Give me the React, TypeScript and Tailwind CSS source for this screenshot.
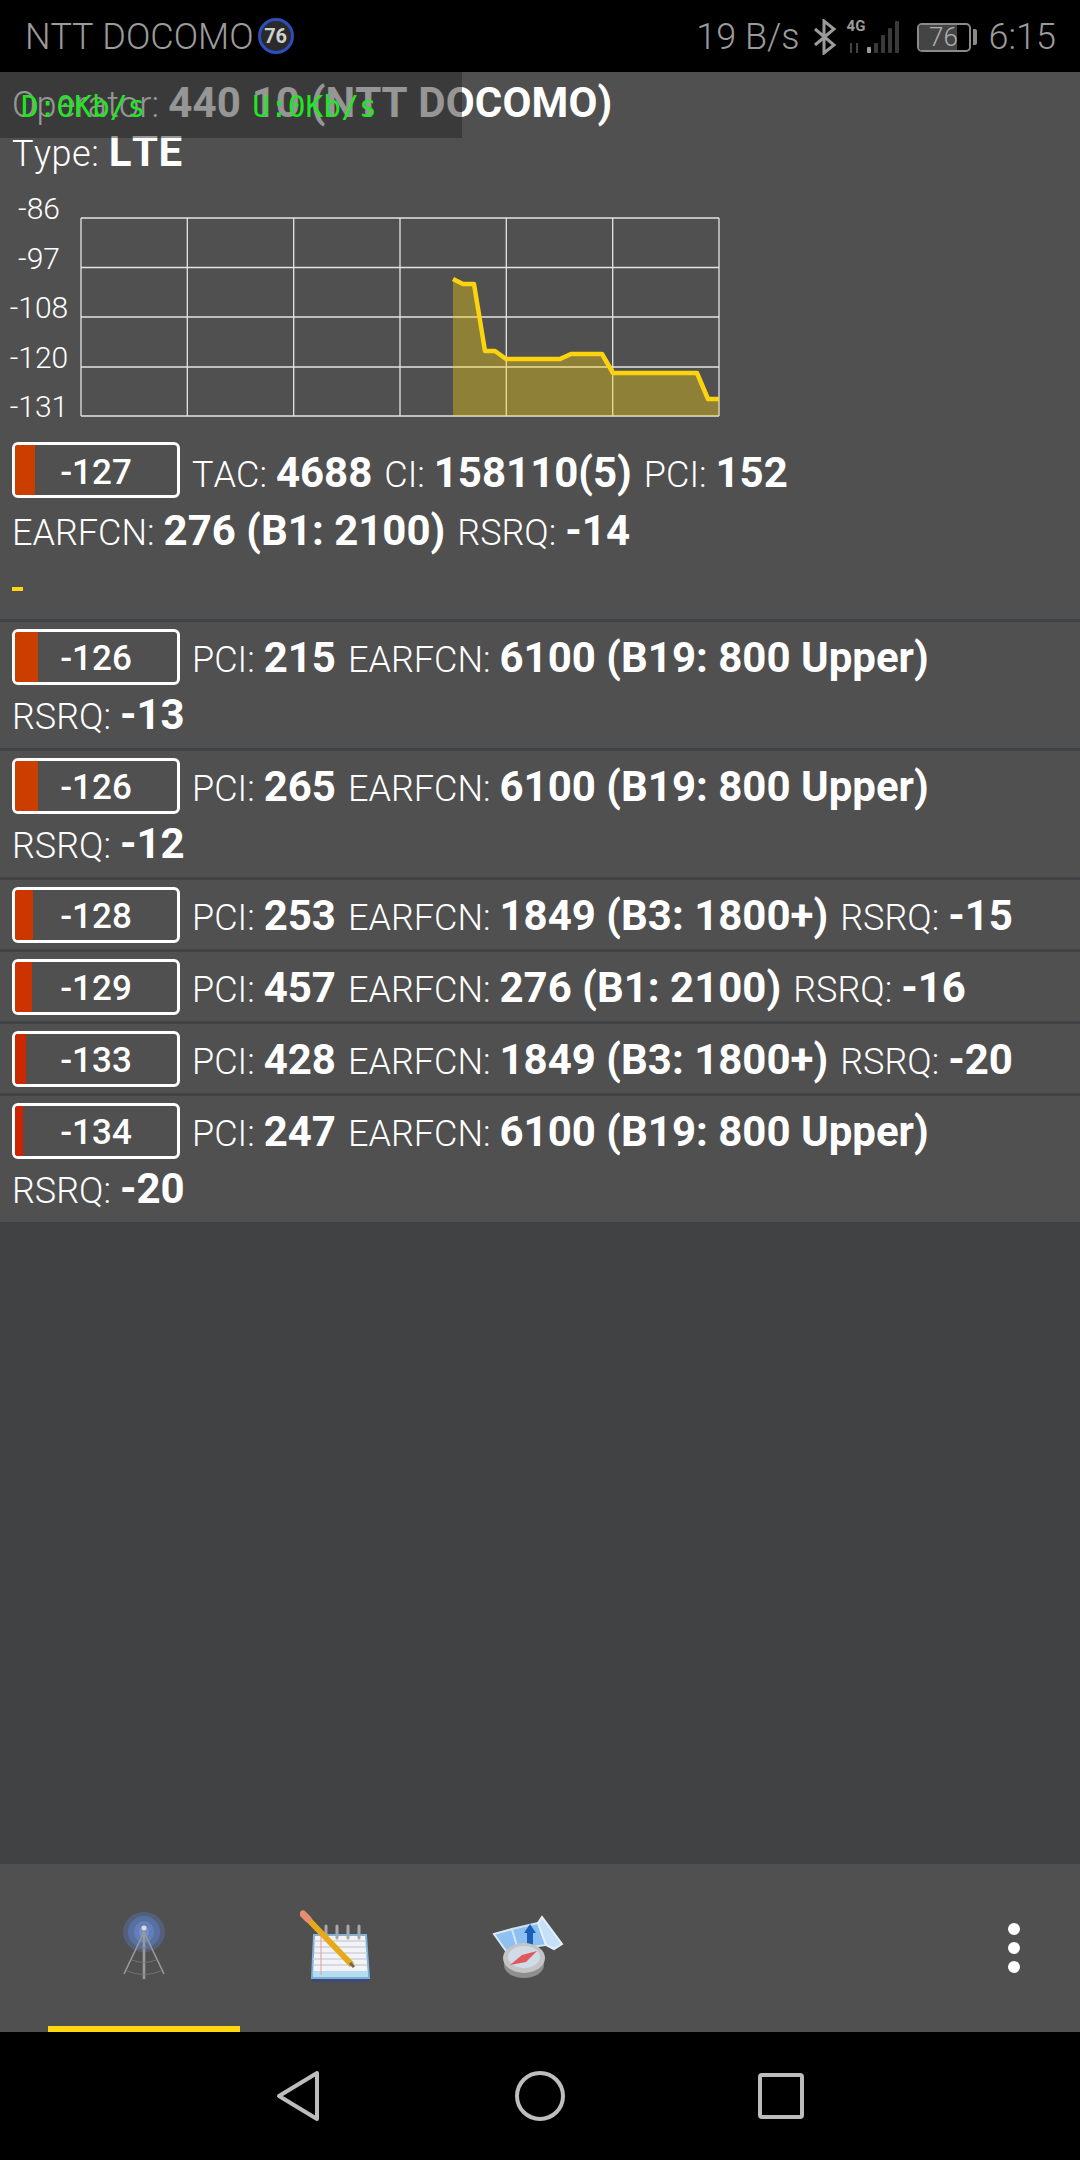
import type { JSX } from 'react'

interface Cell {
  dbm: number
  bar: string
  barColor: string
  parts: [string, string][]
  extra?: [string, string]
}

const CELLS: Cell[] = [
  { dbm: -126, bar: 'w-[23px]', barColor: 'bg-[#cc3d00]', parts: [['PCI:', '215'], ['EARFCN:', '6100 (B19: 800 Upper)']], extra: ['RSRQ:', '-13'] },
  { dbm: -126, bar: 'w-[23px]', barColor: 'bg-[#cc3d00]', parts: [['PCI:', '265'], ['EARFCN:', '6100 (B19: 800 Upper)']], extra: ['RSRQ:', '-12'] },
  { dbm: -128, bar: 'w-[18px]', barColor: 'bg-[#cc3700]', parts: [['PCI:', '253'], ['EARFCN:', '1849 (B3: 1800+)'], ['RSRQ:', '-15']] },
  { dbm: -129, bar: 'w-[17px]', barColor: 'bg-[#cc3300]', parts: [['PCI:', '457'], ['EARFCN:', '276 (B1: 2100)'], ['RSRQ:', '-16']] },
  { dbm: -133, bar: 'w-[11px]', barColor: 'bg-[#cc2800]', parts: [['PCI:', '428'], ['EARFCN:', '1849 (B3: 1800+)'], ['RSRQ:', '-20']] },
  { dbm: -134, bar: 'w-[8px]', barColor: 'bg-[#cc2400]', parts: [['PCI:', '247'], ['EARFCN:', '6100 (B19: 800 Upper)']], extra: ['RSRQ:', '-20'] },
]

const Y_LABELS = ['-86', '-97', '-108', '-120', '-131']

function Field({ label, value }: { label: string; value: string }): JSX.Element {
  return (
    <span className="whitespace-nowrap">
      <span className="font-light">{label}</span> <span className="font-bold text-[42px]">{value}</span>
    </span>
  )
}

function SignalBox({ dbm, bar, barColor }: { dbm: number; bar: string; barColor: string }): JSX.Element {
  return (
    <div className="relative h-[56px] w-[168px] shrink-0 rounded-[6px] border-[3px] border-white overflow-hidden flex items-center justify-center">
      <div className={`absolute left-0 top-0 bottom-0 ${bar} ${barColor}`} />
      <span className="relative mt-[4px] text-[35px] font-medium text-white leading-none">{dbm}</span>
    </div>
  )
}

function Chart(): JSX.Element {
  const pts = '453,279 463,284 474,284 485,351 495,351 506,359 560,359 571,354 602,354 613,373 697,373 708,399 719,399'
  return (
    <svg width="652" height="206" viewBox="75 214 652 206" className="block mt-[31px]">
      {[218, 267.5, 317, 367, 416].map((y) => (
        <line key={y} x1="81" x2="719" y1={y} y2={y} stroke="#e4e4e4" strokeWidth="1.3" />
      ))}
      {[81, 187.3, 293.7, 400, 506.3, 612.7, 719].map((x) => (
        <line key={x} x1={x} x2={x} y1="218" y2="416" stroke="#e4e4e4" strokeWidth="1.3" />
      ))}
      <polygon points={`${pts} 719,416 453,416`} fill="#ffd60f" fillOpacity="0.36" />
      <polyline points={pts} fill="none" stroke="#fbd40f" strokeWidth="4.5" strokeLinejoin="round" />
    </svg>
  )
}

function TowerIcon(): JSX.Element {
  return (
    <svg width="44" height="70" viewBox="0 0 44 70" className="blur-[0.7px]">
      <ellipse cx="22" cy="22" rx="21" ry="20" fill="#566a92" opacity="0.6" />
      <ellipse cx="22" cy="22" rx="16" ry="16" fill="#5876b2" opacity="0.75" />
      <ellipse cx="22" cy="22" rx="10" ry="11" fill="#6c8ac6" opacity="0.6" />
      <ellipse cx="22" cy="22" rx="5" ry="6" fill="#7f9ad0" opacity="0.6" />
      <circle cx="22" cy="18" r="2.5" fill="#dcdcdc" />
      <g stroke="#9a9a9a" strokeWidth="1.6" fill="none">
        <path d="M22 22 L2 64 M22 22 L42 64" />
        <path d="M22 22 V69" strokeWidth="2.6" />
        <path d="M15 38 H29 M10 50 Q22 55 34 50 M5 61 Q22 68 39 61" strokeWidth="0.8" stroke="#7a7a7a" />
      </g>
    </svg>
  )
}

function NotepadIcon(): JSX.Element {
  return (
    <svg width="72" height="76" viewBox="0 0 72 76" className="blur-[0.6px]">
      <rect x="12" y="69" width="57" height="6" rx="2" fill="#3d4a78" />
      <path d="M14 28 H66 L69 71 H12 Z" fill="#f1f3f6" stroke="#7fb1dc" strokeWidth="2" />
      <rect x="13" y="64" width="55" height="6" fill="#b6dcef" />
      <g stroke="#cfd2d8" strokeWidth="1.5">
        <path d="M14 34 H66 M14 40 H66 M14 46 H67 M13 52 H67 M13 58 H67" />
      </g>
      <path d="M21 28 V68" stroke="#e69a9a" strokeWidth="1" />
      <path d="M26 19 V31 M37 19 V31 M48 19 V31 M59 19 V31" stroke="#a8a8a8" strokeWidth="3" strokeLinecap="round" />
      <path d="M5 9 L52 58" stroke="#e7a91a" strokeWidth="6" />
      <path d="M3 7 L8 12" stroke="#e58f70" strokeWidth="7" strokeLinecap="round" />
      <path d="M50 56 L54 60" stroke="#6a6a5a" strokeWidth="3" />
    </svg>
  )
}

function MapIcon(): JSX.Element {
  return (
    <svg width="72" height="68" viewBox="0 0 72 68" className="blur-[0.7px]">
      <path d="M2 23 L20 18 L26 38 L14 40 Z" fill="#8fc0f2" stroke="#d9e8f5" strokeWidth="2" />
      <path d="M20 18 L46 12 L54 34 L26 38 Z" fill="#8cc0f0" stroke="#cfe2f4" strokeWidth="2" />
      <path d="M46 12 L50 6 L70 33 L62 38 L54 34 Z" fill="#c5e0f8" stroke="#e4eff8" strokeWidth="2" />
      <path d="M38 13 L44 22 L41 22 L41 34 L35 34 L35 22 L32 22 Z" fill="#1c5fb8" />
      <ellipse cx="32" cy="54" rx="20" ry="13" fill="#8e8e8e" />
      <ellipse cx="32" cy="47" rx="21" ry="15" fill="#c4c4c4" />
      <ellipse cx="32" cy="46" rx="16" ry="11" fill="#cfdbe6" />
      <path d="M18 54 L30 44 L45 40 L34 51 Z" fill="#e0585c" />
    </svg>
  )
}

export default function App(): JSX.Element {
  return (
    <div className="relative w-[1080px] h-[2160px] flex flex-col bg-[#414243] overflow-hidden font-['Roboto',sans-serif] [font-kerning:none]">
      {/* status bar */}
      <div className="h-[72px] shrink-0 bg-black flex items-center justify-between pt-[2px] pl-[25px] pr-[24px] text-[#9b9b9b] text-[36px]">
        <div className="flex items-center gap-[4px]">
          <span className="font-light">NTT DOCOMO</span>
          <div className="h-[36px] w-[36px] mb-[2px] rounded-full border-[3px] border-[#2c4fc0] bg-[#2a2a2a] flex items-center justify-center text-[20px] font-bold text-[#d0d0d0]">76</div>
        </div>
        <div className="flex items-center">
          <span className="font-light">19 B/s</span>
          <svg width="24" height="36" viewBox="0 0 24 36" fill="none" stroke="#9b9b9b" strokeWidth="3" className="ml-[13px]">
            <path d="M2 10 L21 26 L11 34 V2 L21 10 L2 26" />
          </svg>
          <div className="ml-[10px] relative h-[36px] w-[54px]">
            <span className="absolute left-0 top-0 text-[15px] leading-none font-bold text-[#9b9b9b]">4G</span>
            <svg width="54" height="36" viewBox="0 0 54 36" className="absolute left-0 top-0">
              <path d="M4 24 V34 M10 24 V34" stroke="#444" strokeWidth="2" />
              <rect x="20" y="28" width="4" height="6" fill="#9b9b9b" rx="1" />
              <rect x="27" y="24" width="4" height="10" fill="#3a3a3a" rx="1" />
              <rect x="34" y="16" width="4" height="18" fill="#3a3a3a" rx="1" />
              <rect x="41" y="9" width="4" height="25" fill="#3a3a3a" rx="1" />
              <rect x="48" y="2" width="4" height="32" fill="#3a3a3a" rx="1" />
            </svg>
          </div>
          <div className="ml-[16px] relative h-[29px] w-[54px] rounded-[5px] border-[2px] border-[#8a8a8a] flex items-center overflow-hidden">
            <div className="absolute left-0 top-0 bottom-0 w-[38px] bg-[#444444]" />
            <span className="relative w-full text-center text-[26px] leading-[25px] font-light text-[#b0b0b0]">76</span>
          </div>
          <div className="ml-[2px] h-[16px] w-[4px] rounded-r-[2px] bg-[#8a8a8a]" />
          <span className="ml-[12px] font-light">6:15</span>
        </div>
      </div>

      {/* serving cell */}
      <div className="h-[547px] shrink-0 bg-[#505050] flex flex-col text-white text-[36px]">
        <div className="h-[60px] flex items-center pl-[12px] tracking-[0.15px]">
          <Field label="Operator:" value="440 10 (NTT DOCOMO)" />
        </div>
        <div className="h-[38px] flex items-center pl-[12px] tracking-[0.5px]">
          <Field label="Type:" value="LTE" />
        </div>
        <div className="h-[266px] pt-[13px] flex">
          <div className="w-[78px] shrink-0 flex flex-col mt-[1px]">
            {Y_LABELS.map((l) => (
              <span key={l} className="h-[49.5px] flex items-center justify-center text-[30px] font-light">{l}</span>
            ))}
          </div>
          <div className="ml-[-3px]">
            <Chart />
          </div>
        </div>
        <div className="h-[68px] flex items-center gap-[12px] pl-[12px] whitespace-nowrap">
          <SignalBox dbm={-127} bar="w-[20px]" barColor="bg-[#cc3d00]" />
          <div className="flex items-center gap-[12px] mt-[4px]">
            <Field label="TAC:" value="4688" />
            <Field label="CI:" value="158110(5)" />
            <Field label="PCI:" value="152" />
          </div>
        </div>
        <div className="h-[52px] flex items-center gap-[12px] pl-[12px]">
          <Field label="EARFCN:" value="276 (B1: 2100)" />
          <Field label="RSRQ:" value="-14" />
        </div>
        <div className="pl-[12px] pt-[31px]">
          <div className="h-[4px] w-[11px] bg-[#ffd60f]" />
        </div>
      </div>

      {/* neighbour cells */}
      <div className="flex flex-col">
        {CELLS.map((c, i) => (
          <div key={i} className="mt-[3px] bg-[#505050] pt-[6px] pb-[6px] flex flex-col text-[36px] text-white whitespace-nowrap">
            <div className="h-[57px] flex items-center gap-[12px] pl-[12px]">
              <SignalBox dbm={c.dbm} bar={c.bar} barColor={c.barColor} />
              <div className="flex items-center gap-[12px] mt-[2px]">
                {c.parts.map(([l, v]) => (
                  <Field key={l} label={l} value={v} />
                ))}
              </div>
            </div>
            {c.extra && (
              <div className="h-[57px] pt-[2px] flex items-center pl-[12px]">
                <Field label={c.extra[0]} value={c.extra[1]} />
              </div>
            )}
          </div>
        ))}
      </div>

      <div className="flex-1" />

      {/* tab bar */}
      <div className="h-[168px] shrink-0 bg-[#505050] flex pl-[48px]">
        <div className="w-[192px] flex items-center justify-center border-b-[6px] border-[#ffd60f]">
          <TowerIcon />
        </div>
        <div className="w-[192px] flex items-center justify-center border-b-[6px] border-transparent">
          <NotepadIcon />
        </div>
        <div className="w-[192px] flex items-center justify-center border-b-[6px] border-transparent">
          <MapIcon />
        </div>
        <div className="flex-1 flex flex-col items-end justify-center gap-[7px] pr-[60px]">
          <div className="h-[12px] w-[12px] rounded-full bg-white" />
          <div className="h-[12px] w-[12px] rounded-full bg-white" />
          <div className="h-[12px] w-[12px] rounded-full bg-white" />
        </div>
      </div>

      {/* nav bar */}
      <div className="h-[128px] shrink-0 bg-black flex items-center justify-center">
        <div className="w-[840px] flex items-center justify-center gap-[195px]">
          <svg width="44" height="52" viewBox="0 0 44 52" fill="none" stroke="#bdbdbd" strokeWidth="4" strokeLinejoin="round" className="translate-x-[1px]">
            <path d="M41 3 V49 L3 26 Z" />
          </svg>
          <svg width="50" height="50" viewBox="0 0 50 50" fill="none" stroke="#bdbdbd" strokeWidth="4" className="translate-x-[1px]">
            <circle cx="25" cy="25" r="23" />
          </svg>
          <svg width="46" height="46" viewBox="0 0 46 46" fill="none" stroke="#bdbdbd" strokeWidth="4" strokeLinejoin="round" className="translate-x-[-1px]">
            <rect x="2" y="2" width="42" height="42" rx="2" />
          </svg>
        </div>
      </div>

      {/* throughput overlay */}
      <div className="absolute left-0 top-[72px] w-[462px] h-[66px] bg-[rgba(36,36,36,0.48)]">
        <div className="pl-[21px] pt-[17px] flex gap-[107px] text-[#22e622] text-[29.5px] leading-[36px] font-['DejaVu_Sans_Mono',monospace]">
          <span>D:0Kb/s</span>
          <span>U:0Kb/s</span>
        </div>
      </div>
    </div>
  )
}
